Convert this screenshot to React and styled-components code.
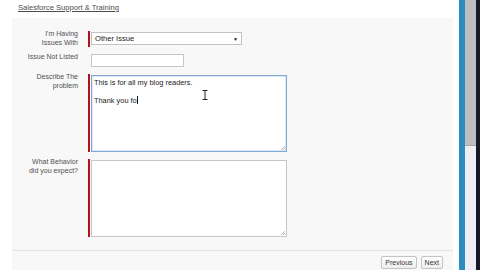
import React from 'react';
import styled, { createGlobalStyle } from 'styled-components';

const Global = createGlobalStyle`
  html, body {
    margin: 0;
    height: 270px;
    overflow: hidden;
    background: #fff;
    font-family: "Liberation Sans", Arial, sans-serif;
  }
`;

const Screen = styled.div`
  display: flex;
  width: 480px;
  height: 270px;
`;

const Main = styled.div`
  flex: 1;
  display: flex;
  flex-direction: column;
  padding: 0 6px 0 12px;
  min-width: 0;
`;

const Crumb = styled.span`
  display: block;
  height: 18px;
  line-height: 16px;
  padding-left: 6px;
  font-size: 7.6px;
  color: #4c4c4c;
  text-decoration: underline;
`;

const Panel = styled.div`
  flex: 1;
  background: #f8f8f8;
  display: flex;
  flex-direction: column;
`;

const Form = styled.div`
  display: grid;
  grid-template-columns: 66px 1fr;
  column-gap: 10px;
  row-gap: 7px;
  padding-top: 13px;
`;

const Label = styled.label`
  text-align: right;
  font-size: 7px;
  line-height: 9px;
  color: #505050;
  margin-top: ${p => p.$offset || -2}px;
`;

const Field = styled.div`
  display: flex;
  align-items: flex-start;
  padding-left: ${p => (p.$required ? '0' : '3px')};
`;

const Req = styled.span`
  width: 2px;
  align-self: stretch;
  background: #b3121b;
  margin-right: 1px;
`;

const Select = styled.div`
  width: 151px;
  height: 13px;
  margin: 1px 0 2px;
  box-sizing: border-box;
  border: 1px solid #c2c2c2;
  background: #fff;
  display: flex;
  align-items: center;
  justify-content: space-between;
  padding: 0 3px 0 3px;
  font-size: 7.6px;
  color: #222;
`;

const Arrow = styled.span`
  font-size: 5px;
  color: #111;
`;

const Input = styled.div`
  width: 93px;
  height: 13px;
  box-sizing: border-box;
  border: 1px solid #c6c6c6;
  background: #fff;
`;

const Area = styled.div`
  position: relative;
  width: 196px;
  height: 77px;
  margin-top: 1px;
  box-sizing: border-box;
  border: 1px solid ${p => (p.$focus ? '#7fa9d6' : '#c6c6c6')};
  box-shadow: ${p => (p.$focus ? 'inset 0 0 0 0.5px #b9d2ec' : 'none')};
  background: #fff;
  padding: 2px 2px;
  font-size: 7.4px;
  line-height: 9px;
  color: #222;
  white-space: pre-wrap;
`;

const Caret = styled.span`
  display: inline-block;
  width: 1px;
  height: 8px;
  background: #111;
  vertical-align: -1px;
`;

const Grip = styled.svg`
  position: absolute;
  right: 1px;
  bottom: 1px;
`;

const Pointer = styled.svg`
  position: absolute;
  left: 110px;
  top: 14px;
`;

const Footer = styled.div`
  margin-top: auto;
  border-top: 1px solid #e4e4e4;
  display: flex;
  justify-content: flex-end;
  gap: 4px;
  padding: 5px 10px 1px;
`;

const Button = styled.button`
  height: 13px;
  padding: 0 3px;
  font-family: inherit;
  font-size: 7px;
  color: #333;
  background: linear-gradient(#fff, #eeeeee);
  border: 1px solid #c4c4c4;
  border-radius: 2px;
`;

const Side = styled.div`
  display: flex;
  height: 100%;
`;

const Blue = styled.div`
  width: 6px;
  background: #2a8cbf;
`;

const Track = styled.div`
  width: 11px;
  background: #eeeef3;
  display: flex;
  flex-direction: column;
`;

const Thumb = styled.div`
  height: 145px;
  background: #bebebe;
  border-bottom: 1px solid #a8a8a8;
`;

const Edge = styled.div`
  width: 4px;
  background: #171a26;
`;

const ResizeGrip = () => (
  <Grip width="5" height="5" viewBox="0 0 5 5">
    <path d="M5 1 L1 5 M5 3 L3 5" stroke="#9a9a9a" strokeWidth="0.7" />
  </Grip>
);

export default function App() {
  return (
    <>
      <Global />
      <Screen>
        <Main>
          <Crumb>Salesforce Support &amp; Training</Crumb>
          <Panel>
            <Form>
              <Label>I'm Having<br />Issues With</Label>
              <Field $required>
                <Req />
                <Select>
                  <span>Other Issue</span>
                  <Arrow>▼</Arrow>
                </Select>
              </Field>

              <Label $offset={0}>Issue Not Listed</Label>
              <Field>
                <Input />
              </Field>

              <Label>Describe The<br />problem</Label>
              <Field $required>
                <Req />
                <Area $focus>
                  {'This is for all my blog readers.\n\nThank you fo'}
                  <Caret />
                  <Pointer width="6" height="10" viewBox="0 0 6 10">
                    <path d="M0.5 0.5 H5.5 M3 0.5 V9.5 M0.5 9.5 H5.5" stroke="#222" strokeWidth="1" fill="none" />
                  </Pointer>
                  <ResizeGrip />
                </Area>
              </Field>

              <Label>What Behavior<br />did you expect?</Label>
              <Field $required>
                <Req />
                <Area>
                  <ResizeGrip />
                </Area>
              </Field>
            </Form>
            <Footer>
              <Button>Previous</Button>
              <Button>Next</Button>
            </Footer>
          </Panel>
        </Main>
        <Side>
          <Blue />
          <Track>
            <Thumb />
          </Track>
          <Edge />
        </Side>
      </Screen>
    </>
  );
}
